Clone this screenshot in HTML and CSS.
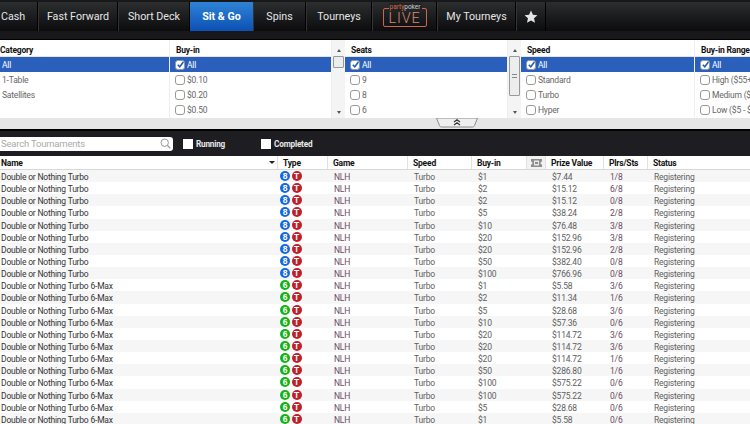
FILE: index.html
```html
<!DOCTYPE html>
<html lang="en">
<head>
<meta charset="utf-8">
<title>Sit &amp; Go</title>
<link rel="stylesheet" href="styles.css">
</head>
<body>
<nav class="nav">
  <a class="tab tab-cash">Cash</a>
  <a class="tab tab-ff">Fast Forward</a>
  <a class="tab tab-sd">Short Deck</a>
  <a class="tab tab-sng">Sit &amp; Go</a>
  <a class="tab tab-spins">Spins</a>
  <a class="tab tab-tourneys">Tourneys</a>
  <a class="tab tab-live">
    <span class="live"><span class="live-brand">party<em>poker</em></span><span class="live-word">LIVE</span></span>
  </a>
  <a class="tab tab-my">My Tourneys</a>
  <a class="tab tab-star"><svg width="14" height="14" viewBox="0 0 24 24"><path fill="#e4e4e4" d="M12 1l3.3 7.300 7.700.8-5.800 5.200 1.700 7.700L12 18l-6.900 4 1.700-7.700L1 9.100l7.700-.8z"/></svg></a>
  <span class="tab-rest"></span>
</nav>

<section class="filters">
  <div class="filter f-cat">
    <div class="f-head">Category</div>
    <div class="f-row on nocheck">All</div>
    <div class="f-row nocheck">1-Table</div>
    <div class="f-row nocheck">Satellites</div>
  </div>
  <div class="filter f-buy">
    <div class="f-head">Buy-in</div>
    <div class="f-row on"><i class="cb"><svg viewBox="0 0 10 10"><path d="M2 5.200l2.200 2.300L8.200 2.200" fill="none" stroke="#1f5dbd" stroke-width="1.700"/></svg></i>All</div>
    <div class="f-row"><i class="cb"></i>$0.10</div>
    <div class="f-row"><i class="cb"></i>$0.20</div>
    <div class="f-row"><i class="cb"></i>$0.50</div>
  </div>
  <div class="scroll"><span class="arrow up"></span><span class="thumb thumb-a"></span><span class="arrow down"></span></div>
  <div class="filter f-seats">
    <div class="f-head">Seats</div>
    <div class="f-row on"><i class="cb"><svg viewBox="0 0 10 10"><path d="M2 5.200l2.200 2.300L8.200 2.200" fill="none" stroke="#1f5dbd" stroke-width="1.700"/></svg></i>All</div>
    <div class="f-row"><i class="cb"></i>9</div>
    <div class="f-row"><i class="cb"></i>8</div>
    <div class="f-row"><i class="cb"></i>6</div>
  </div>
  <div class="scroll"><span class="arrow up"></span><span class="thumb thumb-b"><b></b></span><span class="arrow down"></span></div>
  <div class="filter f-speed">
    <div class="f-head">Speed</div>
    <div class="f-row on"><i class="cb"><svg viewBox="0 0 10 10"><path d="M2 5.200l2.200 2.300L8.200 2.200" fill="none" stroke="#1f5dbd" stroke-width="1.700"/></svg></i>All</div>
    <div class="f-row"><i class="cb"></i>Standard</div>
    <div class="f-row"><i class="cb"></i>Turbo</div>
    <div class="f-row"><i class="cb"></i>Hyper</div>
  </div>
  <div class="filter f-range">
    <div class="f-head">Buy-in Range</div>
    <div class="f-row on"><i class="cb"><svg viewBox="0 0 10 10"><path d="M2 5.200l2.200 2.300L8.200 2.200" fill="none" stroke="#1f5dbd" stroke-width="1.700"/></svg></i>All</div>
    <div class="f-row"><i class="cb"></i>High ($55+)</div>
    <div class="f-row"><i class="cb"></i>Medium ($11 - $54)</div>
    <div class="f-row"><i class="cb"></i>Low ($5 - $10)</div>
  </div>
</section>

<div class="collapse">
  <svg class="collapse-tab" width="42" height="10" viewBox="0 0 42 10"><path d="M.5 0l3 7.500Q4 9 5.500 9h31q1.500 0 2-1.500l3-7.500z" fill="#efefef" stroke="#8c8c8c"/><path d="M18 4l3-2.200L24 4M18 7l3-2.200L24 7" fill="none" stroke="#333" stroke-width="1.200"/></svg>
</div>

<div class="toolbar">
  <div class="search"><span class="search-text">Search Tournaments</span>
    <svg width="11" height="11" viewBox="0 0 11 11"><circle cx="4.700" cy="4.700" r="3.700" fill="none" stroke="#999"/><path d="M7.500 7.500l2.800 2.800" stroke="#999" stroke-width="1.200"/></svg>
  </div>
  <label class="tool tool-run"><i class="box"></i>Running</label>
  <label class="tool"><i class="box"></i>Completed</label>
</div>

<div class="row head">
  <span class="c-name">Name<i class="sort"></i></span>
  <span class="c-type">Type</span>
  <span>Game</span>
  <span>Speed</span>
  <span>Buy-in</span>
  <span class="c-icon"><svg width="11" height="8" viewBox="0 0 11 8"><path fill="#8d8d8d" d="M0 0h11v2.500a1.500 1.500 0 000 3V8H0V5.500a1.500 1.500 0 000-3z"/><path fill="#e9e9e9" d="M3 1.500h5v5H3z"/><path fill="#8d8d8d" d="M4 3h3v2H4z"/></svg></span>
  <span>Prize Value</span>
  <span>Plrs/Sts</span>
  <span>Status</span>
</div>

<div class="rows">
  <div class="row"><span class="c-name">Double or Nothing Turbo</span><span class="c-type"><i class="ball b8">8</i><i class="ball bt">T</i></span><span class="game">NLH</span><span>Turbo</span><span>$1</span><span></span><span>$7.44</span><span class="plrs">1/8</span><span>Registering</span></div>
  <div class="row"><span class="c-name">Double or Nothing Turbo</span><span class="c-type"><i class="ball b8">8</i><i class="ball bt">T</i></span><span class="game">NLH</span><span>Turbo</span><span>$2</span><span></span><span>$15.12</span><span class="plrs">6/8</span><span>Registering</span></div>
  <div class="row"><span class="c-name">Double or Nothing Turbo</span><span class="c-type"><i class="ball b8">8</i><i class="ball bt">T</i></span><span class="game">NLH</span><span>Turbo</span><span>$2</span><span></span><span>$15.12</span><span class="plrs">0/8</span><span>Registering</span></div>
  <div class="row"><span class="c-name">Double or Nothing Turbo</span><span class="c-type"><i class="ball b8">8</i><i class="ball bt">T</i></span><span class="game">NLH</span><span>Turbo</span><span>$5</span><span></span><span>$38.24</span><span class="plrs">2/8</span><span>Registering</span></div>
  <div class="row"><span class="c-name">Double or Nothing Turbo</span><span class="c-type"><i class="ball b8">8</i><i class="ball bt">T</i></span><span class="game">NLH</span><span>Turbo</span><span>$10</span><span></span><span>$76.48</span><span class="plrs">3/8</span><span>Registering</span></div>
  <div class="row"><span class="c-name">Double or Nothing Turbo</span><span class="c-type"><i class="ball b8">8</i><i class="ball bt">T</i></span><span class="game">NLH</span><span>Turbo</span><span>$20</span><span></span><span>$152.96</span><span class="plrs">3/8</span><span>Registering</span></div>
  <div class="row"><span class="c-name">Double or Nothing Turbo</span><span class="c-type"><i class="ball b8">8</i><i class="ball bt">T</i></span><span class="game">NLH</span><span>Turbo</span><span>$20</span><span></span><span>$152.96</span><span class="plrs">2/8</span><span>Registering</span></div>
  <div class="row"><span class="c-name">Double or Nothing Turbo</span><span class="c-type"><i class="ball b8">8</i><i class="ball bt">T</i></span><span class="game">NLH</span><span>Turbo</span><span>$50</span><span></span><span>$382.40</span><span class="plrs">0/8</span><span>Registering</span></div>
  <div class="row"><span class="c-name">Double or Nothing Turbo</span><span class="c-type"><i class="ball b8">8</i><i class="ball bt">T</i></span><span class="game">NLH</span><span>Turbo</span><span>$100</span><span></span><span>$766.96</span><span class="plrs">0/8</span><span>Registering</span></div>
  <div class="row"><span class="c-name">Double or Nothing Turbo 6-Max</span><span class="c-type"><i class="ball b6">6</i><i class="ball bt">T</i></span><span class="game">NLH</span><span>Turbo</span><span>$1</span><span></span><span>$5.58</span><span class="plrs">3/6</span><span>Registering</span></div>
  <div class="row"><span class="c-name">Double or Nothing Turbo 6-Max</span><span class="c-type"><i class="ball b6">6</i><i class="ball bt">T</i></span><span class="game">NLH</span><span>Turbo</span><span>$2</span><span></span><span>$11.34</span><span class="plrs">1/6</span><span>Registering</span></div>
  <div class="row"><span class="c-name">Double or Nothing Turbo 6-Max</span><span class="c-type"><i class="ball b6">6</i><i class="ball bt">T</i></span><span class="game">NLH</span><span>Turbo</span><span>$5</span><span></span><span>$28.68</span><span class="plrs">3/6</span><span>Registering</span></div>
  <div class="row"><span class="c-name">Double or Nothing Turbo 6-Max</span><span class="c-type"><i class="ball b6">6</i><i class="ball bt">T</i></span><span class="game">NLH</span><span>Turbo</span><span>$10</span><span></span><span>$57.36</span><span class="plrs">0/6</span><span>Registering</span></div>
  <div class="row"><span class="c-name">Double or Nothing Turbo 6-Max</span><span class="c-type"><i class="ball b6">6</i><i class="ball bt">T</i></span><span class="game">NLH</span><span>Turbo</span><span>$20</span><span></span><span>$114.72</span><span class="plrs">3/6</span><span>Registering</span></div>
  <div class="row"><span class="c-name">Double or Nothing Turbo 6-Max</span><span class="c-type"><i class="ball b6">6</i><i class="ball bt">T</i></span><span class="game">NLH</span><span>Turbo</span><span>$20</span><span></span><span>$114.72</span><span class="plrs">3/6</span><span>Registering</span></div>
  <div class="row"><span class="c-name">Double or Nothing Turbo 6-Max</span><span class="c-type"><i class="ball b6">6</i><i class="ball bt">T</i></span><span class="game">NLH</span><span>Turbo</span><span>$20</span><span></span><span>$114.72</span><span class="plrs">1/6</span><span>Registering</span></div>
  <div class="row"><span class="c-name">Double or Nothing Turbo 6-Max</span><span class="c-type"><i class="ball b6">6</i><i class="ball bt">T</i></span><span class="game">NLH</span><span>Turbo</span><span>$50</span><span></span><span>$286.80</span><span class="plrs">1/6</span><span>Registering</span></div>
  <div class="row"><span class="c-name">Double or Nothing Turbo 6-Max</span><span class="c-type"><i class="ball b6">6</i><i class="ball bt">T</i></span><span class="game">NLH</span><span>Turbo</span><span>$100</span><span></span><span>$575.22</span><span class="plrs">0/6</span><span>Registering</span></div>
  <div class="row"><span class="c-name">Double or Nothing Turbo 6-Max</span><span class="c-type"><i class="ball b6">6</i><i class="ball bt">T</i></span><span class="game">NLH</span><span>Turbo</span><span>$100</span><span></span><span>$575.22</span><span class="plrs">0/6</span><span>Registering</span></div>
  <div class="row"><span class="c-name">Double or Nothing Turbo 6-Max</span><span class="c-type"><i class="ball b6">6</i><i class="ball bt">T</i></span><span class="game">NLH</span><span>Turbo</span><span>$5</span><span></span><span>$28.68</span><span class="plrs">0/6</span><span>Registering</span></div>
  <div class="row"><span class="c-name">Double or Nothing Turbo 6-Max</span><span class="c-type"><i class="ball b6">6</i><i class="ball bt">T</i></span><span class="game">NLH</span><span>Turbo</span><span>$1</span><span></span><span>$5.58</span><span class="plrs">0/6</span><span>Registering</span></div>
</div>
</body>
</html>
```

FILE: styles.css
```css
* { box-sizing: border-box; }
html, body { margin: 0; height: 424px; overflow: hidden; background: #fff; }
body { font-family: Roboto, "Liberation Sans", sans-serif; font-size: 8.500px; letter-spacing: -.2px; color: #5e5e5e; }

.nav { display: flex; height: 40px; background: #18181a; padding-top: 2px; align-items: flex-start; border-bottom: 1px solid #000; letter-spacing: 0; }
.tab { height: 29px; display: flex; align-items: center; justify-content: center; font-size: 10.700px; color: #e6e6e6; background: linear-gradient(#2d2e30, #1d1e20 45%, #0c0c0d); border-right: 1px solid #000; border-left: 1px solid #333; }
.tab-cash { width: 38px; justify-content: flex-start; border-left: 0; padding-left: 1px; }
.tab-ff { width: 80px; }
.tab-sd { width: 72px; }
.tab-sng { width: 63px; background: linear-gradient(#2f84d6, #0b50b4); color: #fff; font-weight: 700; border: 0; }
.tab-spins { width: 53px; }
.tab-tourneys { width: 66px; }
.tab-live { width: 65px; }
.tab-my { width: 79px; }
.tab-star { width: 30px; }
.tab-rest { flex: 1; height: 29px; background: linear-gradient(#2d2e30, #1d1e20 45%, #0c0c0d); }

.live { position: relative; display: flex; justify-content: center; align-items: center; width: 44px; height: 19px; margin-top: 2px; border: 1px solid #c8674a; border-radius: 2px; }
.live-brand { position: absolute; top: -6px; left: 5px; padding: 0 1px; font-size: 6.500px; line-height: 9px; color: #d9694a; background: #222325; white-space: nowrap; }
.live-brand em { font-style: normal; color: #cfcfcf; }
.live-word { font-size: 14.500px; line-height: 14px; letter-spacing: .8px; color: #d98a70; font-weight: 300; margin-top: 2px; }

.filters { display: grid; grid-template-columns: 170px 162px 13px 163px 13px 174px 1fr; height: 78px; background: #fff; overflow: hidden; }
.filter { overflow: hidden; border-right: 1px solid #eee; }
.f-range { border-right: 0; }
.f-head { height: 17px; padding: 5px 0 0 6px; font-weight: 700; font-size: 8.500px; line-height: 11px; color: #111; border-bottom: 1px solid #e4e4e4; white-space: nowrap; }
.f-cat .f-head { padding-left: 0; }
.f-row { display: flex; align-items: center; gap: 2px; height: 15px; padding-left: 5px; color: #666; white-space: nowrap; }
.f-row.on { background: #2a60bb; color: #fff; }
.nocheck { padding-left: 2px; }
.cb { display: block; flex: none; width: 10px; height: 10px; border: 1px solid #999; border-radius: 3px; background: #fff; }
.cb svg { display: block; width: 9px; height: 9px; margin: -.5px; }

.scroll { display: flex; flex-direction: column; align-items: center; background: #f4f4f4; padding-top: 9px; }
.thumb { display: flex; align-items: center; justify-content: center; flex: none; width: 11px; background: #ededed; border: 1px solid #999; border-radius: 1px; }
.thumb-a { height: 12px; margin-top: 4px; }
.thumb-b { height: 40px; margin-top: 4px; }
.thumb-b b { display: block; width: 5px; height: 4px; border-top: 1px solid #888; border-bottom: 1px solid #888; }
.arrow { display: block; width: 0; height: 0; border-left: 2.500px solid transparent; border-right: 2.500px solid transparent; }
.arrow.up { border-bottom: 3px solid #555; }
.arrow.down { border-top: 3px solid #555; margin-top: auto; margin-bottom: 4px; }

.collapse { display: flex; justify-content: center; height: 11px; padding-left: 164px; background: #e6e6e6; }
.collapse-tab { display: block; }

.toolbar { display: flex; align-items: center; height: 27px; background: #1e1e22; border-top: 2px solid #000; }
.search { display: flex; align-items: center; justify-content: space-between; width: 173px; height: 14px; padding: 0 2px 0 1px; background: #fff; border-radius: 0 3px 3px 0; }
.search-text { font-size: 9.500px; color: #aaa; }
.tool { display: flex; align-items: center; gap: 3px; font-size: 8.200px; font-weight: 700; color: #e8e8e8; }
.tool-run { margin: 0 36px 0 10px; }
.box { display: block; width: 10px; height: 10px; background: #fff; }

.row { display: grid; grid-template-columns: 277px 50px 80px 64px 55px 19px 58px 44px 1fr; height: 12.150px; line-height: 14.500px; white-space: nowrap; }
.rows .row:nth-child(odd) { background: #f6f6f6; }
.row > span { padding-left: 7px; overflow: hidden; }
.row > .c-name { padding-left: 1px; color: #333; }
.row > .c-type { display: flex; align-items: center; gap: 1.500px; padding-left: 3px; }
.game, .plrs { color: #6b4a62; }

.head { height: 14px; line-height: 15px; font-weight: 700; color: #111; border-bottom: 1px solid #d8d8d8; }
.head > span { border-left: 1px solid #e2e2e2; padding-left: 5px; }
.head > .c-name { position: relative; border-left: 0; color: #111; }
.head > .c-type { display: block; padding-left: 5px; }
.head > .c-icon { display: flex; align-items: center; justify-content: center; padding: 0; background: #f2f2f2; }
.sort { position: absolute; right: 2px; top: 5px; width: 0; height: 0; border-left: 3px solid transparent; border-right: 3px solid transparent; border-top: 3px solid #222; }

.ball { display: flex; align-items: center; justify-content: center; flex: none; width: 10px; height: 10px; border-radius: 50%; font-family: "Liberation Sans", sans-serif; font-style: normal; font-size: 8.500px; font-weight: 700; line-height: 10px; letter-spacing: 0; color: #fff; }
.b8 { background: #1668e0; }
.b6 { background: #16b116; }
.bt { background: #c01f2a; }
```
